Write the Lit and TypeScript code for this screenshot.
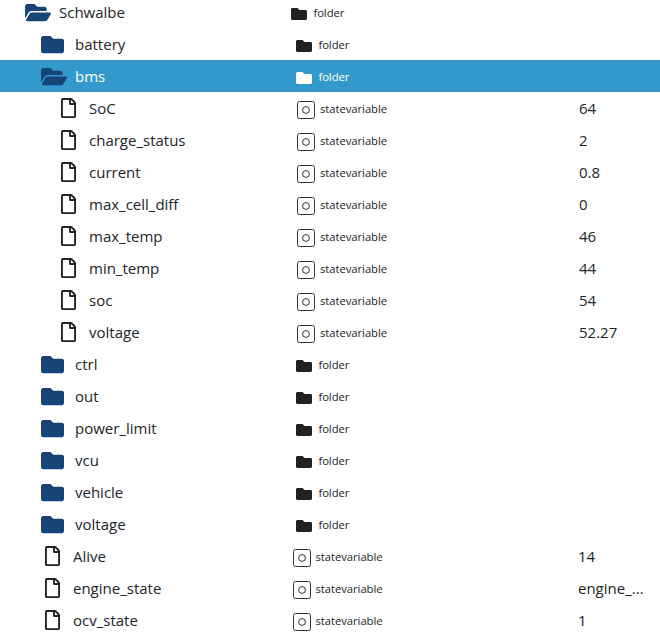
import { LitElement, html, css, svg } from "lit";
import { customElement } from "lit/decorators.js";
import { classMap } from "lit/directives/class-map.js";

type Kind = "folder" | "statevariable";
interface Row {
  name: string;
  kind: Kind;
  level: number;
  value?: string;
  open?: boolean;
  selected?: boolean;
}

const folder = (name: string): Row => ({ name, kind: "folder", level: 1 });
const leaf = (name: string, value: string, level = 2): Row => ({ name, kind: "statevariable", level, value });

const ROWS: Row[] = [
  { name: "Schwalbe", kind: "folder", level: 0, open: true },
  folder("battery"),
  { name: "bms", kind: "folder", level: 1, open: true, selected: true },
  leaf("SoC", "64"),
  leaf("charge_status", "2"),
  leaf("current", "0.8"),
  leaf("max_cell_diff", "0"),
  leaf("max_temp", "46"),
  leaf("min_temp", "44"),
  leaf("soc", "54"),
  leaf("voltage", "52.27"),
  folder("ctrl"),
  folder("out"),
  folder("power_limit"),
  folder("vcu"),
  folder("vehicle"),
  folder("voltage"),
  leaf("Alive", "14", 1),
  leaf("engine_state", "engine_...", 1),
  leaf("ocv_state", "1", 1),
];

const CLOSED = svg`<path d="M464 128H272l-64-64H48C21.49 64 0 85.49 0 112v288c0 26.51 21.49 48 48 48h416c26.51 0 48-21.49 48-48V176c0-26.51-21.49-48-48-48z"/>`;
const OPEN = svg`<path d="M572.694 292.093L500.27 416.248A63.997 63.997 0 0 1 444.989 448H45.025c-18.523 0-30.064-20.093-20.731-36.093l72.424-124.155A64 64 0 0 1 152 256h399.964c18.523 0 30.064 20.093 20.73 36.093zM152 224h328v-48c0-26.51-21.49-48-48-48H272l-64-64H48C21.49 64 0 85.49 0 112v278.046l69.077-118.418C86.214 242.25 117.989 224 152 224z"/>`;
const FILE = svg`<path d="M369.9 97.9L286 14C277 5 264.8-.1 252.1-.1H48C21.5 0 0 21.5 0 48v416c0 26.5 21.5 48 48 48h288c26.5 0 48-21.5 48-48V131.9c0-12.7-5.1-25-14.1-34zM332.1 128H256V51.9l76.1 76.1zM48 464V48h160v104c0 13.3 10.7 24 24 24h104v288H48z"/>`;

@customElement("app-root")
export class AppRoot extends LitElement {
  static styles = css`
    :host {
      display: block;
      height: 632px;
      overflow: hidden;
      background: #fff;
      color: #212529;
      font: 15px/32px "Open Sans", "Noto Sans", sans-serif;
    }
    .tree { margin-top: -4px; }
    .row {
      display: grid;
      grid-template: 32px / 291px 287px 1fr;
      white-space: nowrap;
    }
    .selected { background: #3399cd; color: #fff; }
    .name, .type { display: flex; align-items: center; }
    .name { padding-left: 25px; }
    .l1 .name { padding-left: 41px; }
    .l2 .name { padding-left: 57px; }
    .l1 .folder.type { padding-left: 5px; }
    .l1 .statevariable.type { padding-left: 1.5px; }
    .l2 .type { padding-left: 6px; }
    .l2 .value { padding-left: 1px; }
    svg { display: block; flex: none; }
    .closed { width: 23px; height: 23px; margin-right: 11px; fill: #164477; }
    .open { width: 26px; height: 23px; margin-right: 8px; fill: #164477; }
    .file { width: 15px; height: 20px; margin: 0 13px 0 4px; fill: #212121; }
    .type { font-size: 11.3px; letter-spacing: -0.06px; }
    .type span { line-height: 30px; margin-top: 2px; }
    .small { width: 16px; height: 16px; margin: 4px 6px 0 .4px; fill: #212121; }
    .selected .small { fill: #fff; }
    .state { width: 18px; height: 18px; margin: 4px 5px 0 0; fill: none; stroke: #333; }
  `;

  private icon(r: Row) {
    if (r.kind === "statevariable") return html`<svg class="file" viewBox="0 0 384 512">${FILE}</svg>`;
    return r.open
      ? html`<svg class="open" viewBox="0 0 576 512">${OPEN}</svg>`
      : html`<svg class="closed" viewBox="0 0 512 512">${CLOSED}</svg>`;
  }

  private typeIcon(r: Row) {
    return r.kind === "folder"
      ? html`<svg class="small" viewBox="0 0 512 512">${CLOSED}</svg>`
      : html`<svg class="state" viewBox="0 0 18 18"><rect x=".5" y=".5" width="17" height="17" rx="2"/><circle cx="9" cy="9" r="3.4"/></svg>`;
  }

  render() {
    return html`<div class="tree" role="tree">
      ${ROWS.map(
        (r) => html`<div role="treeitem" class=${classMap({ row: true, ["l" + r.level]: true, selected: !!r.selected })}>
          <div class="name">${this.icon(r)}<span>${r.name}</span></div>
          <div class="type ${r.kind}">${this.typeIcon(r)}<span>${r.kind}</span></div>
          <div class="value">${r.value ?? ""}</div>
        </div>`
      )}
    </div>`;
  }
}
